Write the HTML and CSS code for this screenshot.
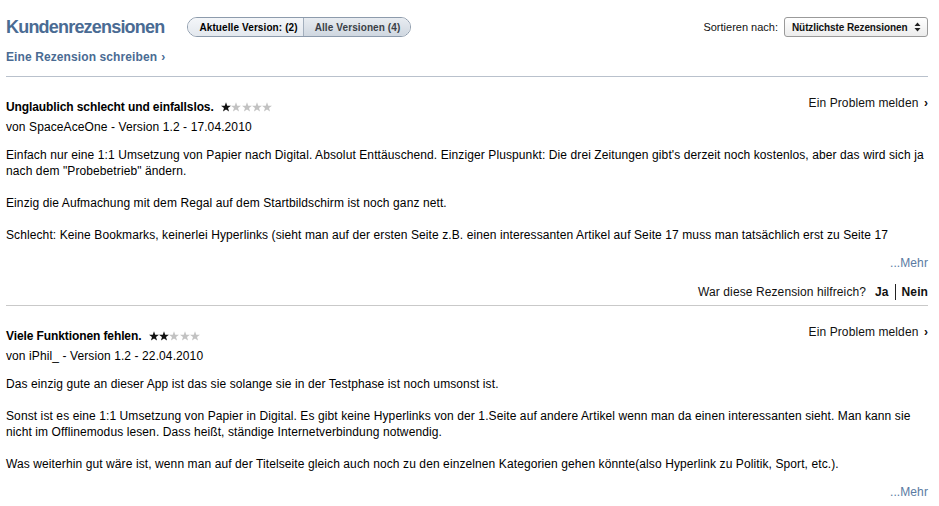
FILE: index.html
```html
<!DOCTYPE html>
<html lang="de">
<head>
<meta charset="utf-8">
<title>Kundenrezensionen</title>
<link rel="stylesheet" href="styles.css">
</head>
<body>
<svg width="0" height="0" class="defs" aria-hidden="true">
  <symbol id="star" viewBox="0 0 10 10">
    <polygon points="5,0.2 6.23,3.7 9.95,3.79 7,6.05 8.06,9.61 5,7.5 1.94,9.61 3,6.05 0.05,3.79 3.77,3.7"/>
  </symbol>
</svg>
<div class="page">
  <div class="header">
    <h1 class="title">Kundenrezensionen</h1>
    <div class="toggle">
      <span class="seg seg-on">Aktuelle Version: (2)</span>
      <span class="seg seg-off">Alle Versionen (4)</span>
    </div>
    <div class="sort">
      <span class="sort-label">Sortieren nach:</span>
      <span class="select"><span class="select-text">Nützlichste Rezensionen</span>
        <svg class="updown" width="7" height="10" viewBox="0 0 7 10"><path d="M3.5 0.5 L6.5 4 H0.5 Z M3.5 9.5 L6.5 6 H0.5 Z" fill="#222"/></svg>
      </span>
    </div>
  </div>
  <div class="write"><a class="write-link">Eine Rezension schreiben</a><span class="chev">›</span></div>
  <hr class="rule">

  <div class="review">
    <div class="review-head">
      <div class="review-left">
        <div class="review-title">Unglaublich schlecht und einfallslos.
          <span class="stars">
            <svg class="star on"><use href="#star"/></svg><svg class="star off"><use href="#star"/></svg><svg class="star off"><use href="#star"/></svg><svg class="star off"><use href="#star"/></svg><svg class="star off"><use href="#star"/></svg>
          </span>
        </div>
        <div class="meta">von SpaceAceOne - Version 1.2 - 17.04.2010</div>
      </div>
      <div class="problem">Ein Problem melden <span class="chev dark">›</span></div>
    </div>
    <div class="body">
      <p>Einfach nur eine 1:1 Umsetzung von Papier nach Digital. Absolut Enttäuschend. Einziger Pluspunkt: Die drei Zeitungen gibt's derzeit noch kostenlos, aber das wird sich ja nach dem "Probebetrieb" ändern.</p>
      <p>Einzig die Aufmachung mit dem Regal auf dem Startbildschirm ist noch ganz nett.</p>
      <p>Schlecht: Keine Bookmarks, keinerlei Hyperlinks (sieht man auf der ersten Seite z.B. einen interessanten Artikel auf Seite 17 muss man tatsächlich erst zu Seite 17</p>
    </div>
    <div class="more">...Mehr</div>
    <div class="helpful">War diese Rezension hilfreich? <b class="vote">Ja</b><span class="sep"></span><b class="vote">Nein</b></div>
  </div>
  <hr class="rule rule-grey">

  <div class="review">
    <div class="review-head">
      <div class="review-left">
        <div class="review-title">Viele Funktionen fehlen.
          <span class="stars">
            <svg class="star on"><use href="#star"/></svg><svg class="star on"><use href="#star"/></svg><svg class="star off"><use href="#star"/></svg><svg class="star off"><use href="#star"/></svg><svg class="star off"><use href="#star"/></svg>
          </span>
        </div>
        <div class="meta">von iPhil_ - Version 1.2 - 22.04.2010</div>
      </div>
      <div class="problem">Ein Problem melden <span class="chev dark">›</span></div>
    </div>
    <div class="body">
      <p>Das einzig gute an dieser App ist das sie solange sie in der Testphase ist noch umsonst ist.</p>
      <p>Sonst ist es eine 1:1 Umsetzung von Papier in Digital. Es gibt keine Hyperlinks von der 1.Seite auf andere Artikel wenn man da einen interessanten sieht. Man kann sie nicht im Offlinemodus lesen. Dass heißt, ständige Internetverbindung notwendig.</p>
      <p>Was weiterhin gut wäre ist, wenn man auf der Titelseite gleich auch noch zu den einzelnen Kategorien gehen könnte(also Hyperlink zu Politik, Sport, etc.).</p>
    </div>
    <div class="more">...Mehr</div>
  </div>
</div>
</body>
</html>
```
FILE: styles.css
```css
* { box-sizing: border-box; }
html, body { margin: 0; padding: 0; background: #fff; }
body {
  font-family: "Liberation Sans", Arial, Helvetica, sans-serif;
  font-size: 12px;
  letter-spacing: 0.1px;
  color: #000;
}
.defs { position: absolute; width: 0; height: 0; overflow: hidden; }
.page { padding: 0 11px 0 6px; }

.header {
  display: flex;
  align-items: center;
  height: 22px;
  margin-top: 16px;
}
.title {
  margin: 0;
  font-size: 18px;
  line-height: 22px;
  font-weight: bold;
  letter-spacing: -0.8px;
  color: #4a6b93;
}
.toggle {
  display: flex;
  margin-left: 23px;
  height: 20px;
  border: 1px solid #8d9bac;
  border-radius: 10px;
  overflow: hidden;
  font-size: 10px;
  font-weight: bold;
  letter-spacing: 0.1px;
}
.seg {
  display: flex;
  align-items: center;
  white-space: nowrap;
}
.seg-on {
  background: linear-gradient(#f4f6f9, #e3e8ee);
  color: #000;
  padding: 0 5px 0 11px;
  border-right: 1px solid #a3afbd;
}
.seg-off {
  background: linear-gradient(#e8ecf1, #cfd7e0);
  color: #3a3f46;
  padding: 0 10px 0 11px;
}
.sort {
  margin-left: auto;
  display: flex;
  align-items: center;
}
.sort-label { font-size: 11px; letter-spacing: 0; margin-right: 6px; color: #111; }
.select {
  display: flex;
  align-items: center;
  width: 144px;
  height: 20px;
  padding: 0 0 0 7px;
  border: 1px solid #9a9a9a;
  border-radius: 3px;
  background: linear-gradient(#ffffff, #ececec);
  font-size: 10px;
  font-weight: bold;
  letter-spacing: -0.1px;
  color: #111;
  white-space: nowrap;
}
.updown { margin-left: auto; margin-right: 6px; }

.write {
  margin-top: 11px;
  line-height: 16px;
  font-weight: bold;
  color: #4a6b93;
}
.write-link { color: #4a6b93; }
.chev { font-weight: bold; margin-left: 4px; }
.chev.dark { color: #111; margin-left: 2px; }

.rule {
  margin: 11px 0 0;
  border: 0;
  height: 1px;
  background: #b9c1cc;
}
.rule-grey { margin-top: 5px; background: #c9c9c9; }

.review-head {
  display: flex;
  align-items: flex-start;
  padding-top: 18px;
}
.review-left { flex: 1; }
.review-title {
  margin-top: 4px;
  line-height: 16px;
  font-weight: bold;
  letter-spacing: -0.1px;
}
.stars { display: inline-flex; gap: 0.3px; margin-left: 4px; vertical-align: -1px; }
.star { width: 10px; height: 10px; }
.star.on { fill: #111; }
.star.off { fill: #c2c2c2; }
.meta { margin-top: 4px; line-height: 16px; }
.problem { line-height: 16px; color: #111; }

.body { margin-top: 12px; }
.body p { margin: 0 0 16px; line-height: 16px; }
.body p:last-child { margin-bottom: 0; }

.more {
  margin-top: 12px;
  line-height: 16px;
  text-align: right;
  color: #5a7aa2;
}
.helpful {
  margin-top: 13px;
  line-height: 16px;
  display: flex;
  justify-content: flex-end;
  align-items: center;
  color: #111;
}
.vote { margin-left: 9px; }
.sep {
  display: inline-block;
  width: 1px;
  height: 16px;
  background: #222;
  margin-left: 6px;
  margin-right: -3px;
}
```
